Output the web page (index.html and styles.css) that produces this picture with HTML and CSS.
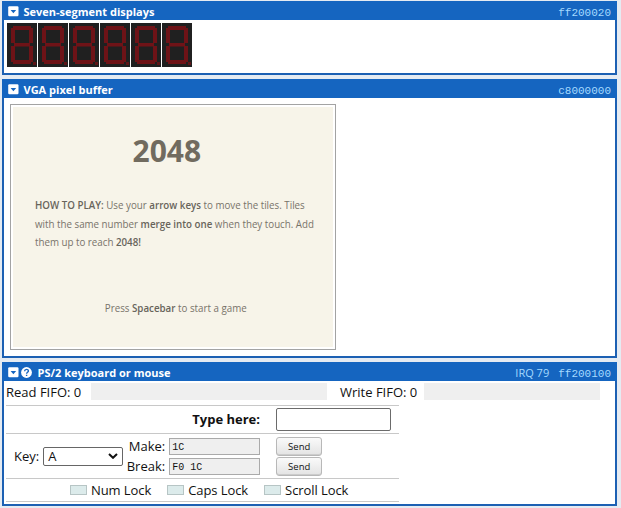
FILE: index.html
```html
<!DOCTYPE html>
<html lang="en">
<head>
<meta charset="utf-8">
<title>Devices</title>
<link rel="stylesheet" href="styles.css">
</head>
<body>
<svg width="0" height="0" class="defs">
  <symbol id="collapse" viewBox="0 0 11 11"><rect x=".2" y=".2" width="10.3" height="10" rx="1.2" fill="#fff"/><path d="M2.6 4h5.6L5.4 7.2z" fill="#1565c0"/></symbol>
  <symbol id="digit" viewBox="0 0 30 44">
    <rect width="30" height="44" fill="#202020"/>
    <g fill="#6e1317"><path d="M6 3h18v4H6zM7 20h16v3.5H7zM6 37h18v4H6zM4 5h4v15H4zM22 5h4v15h-4zM4 23h4v16H4zM22 23h4v16h-4z"/><path d="M26 39h3v3h-3z" opacity=".8"/></g>
  </symbol>
</svg>
<main>
  <section class="panel segments">
    <header><svg class="toggle"><use href="#collapse"/></svg><h2>Seven-segment displays</h2><code>ff200020</code></header>
    <div class="digits">
      <svg><use href="#digit"/></svg><svg><use href="#digit"/></svg><svg><use href="#digit"/></svg><svg><use href="#digit"/></svg><svg><use href="#digit"/></svg><svg><use href="#digit"/></svg>
    </div>
  </section>
  <section class="panel vga">
    <header><svg class="toggle"><use href="#collapse"/></svg><h2>VGA pixel buffer</h2><code>c8000000</code></header>
    <div class="screen">
      <h1>2048</h1>
      <p><b>HOW TO PLAY:</b> Use your <b>arrow keys</b> to move the tiles. Tiles<br>with the same number <b>merge into one</b> when they touch. Add<br>them up to reach <b>2048!</b></p>
      <p class="start">Press <b>Spacebar</b> to start a game</p>
    </div>
  </section>
  <section class="panel ps2">
    <header>
      <svg class="toggle"><use href="#collapse"/></svg>
      <svg class="help" viewBox="0 0 11 11"><circle cx="5.5" cy="5.5" r="5.4" fill="#fff"/><path d="M3.6 4.2C3.7 1.7 7.4 1.8 7.4 4c0 1.4-1.8 1.2-1.8 2.7M5.6 7.7v1.4" fill="none" stroke="#1565c0" stroke-width="1.4"/></svg>
      <h2>PS/2 keyboard or mouse</h2><span class="irq">IRQ 79</span><code>ff200100</code>
    </header>
    <div class="fifo"><span>Read FIFO: 0</span><i></i><span class="write">Write FIFO: 0</span><i></i></div>
    <div class="form">
      <div class="row typing"><label for="type">Type here:</label><input id="type" type="text"></div>
      <div class="row keys">
        <label for="key">Key:</label>
        <div class="select" id="key"><span>A</span><svg viewBox="0 0 10 6"><path d="M1 1l4 3.8L9 1" fill="none" stroke="#111" stroke-width="2"/></svg></div>
        <div class="codes"><span>Make:</span><output>1C</output><button>Send</button><span>Break:</span><output>F0 1C</output><button>Send</button></div>
      </div>
      <div class="row locks"><span>Num Lock</span><span>Caps Lock</span><span>Scroll Lock</span></div>
    </div>
  </section>
</main>
</body>
</html>
```
FILE: styles.css
```css
* { box-sizing: border-box; }
body { margin: 0; height: 508px; overflow: hidden; background: #e5ebf2; font: 13px/18px "Open Sans", sans-serif; color: #111; }
.defs { display: block; }
main { display: flex; flex-direction: column; gap: 4px; width: 615px; margin: 1px 0 0 2px; }
.panel { border: 2px solid #1c60b3; border-top: 0; background: #fff; }
.segments { height: 74px; }
.vga { height: 279px; }
.ps2 { height: 144px; }
header { display: flex; align-items: center; height: 19px; margin: 0 -2px; padding: 3px 6px 0 6px; background: #1565c0; color: #a5daff; }
h2 { margin: 0 auto 0 4.5px; font-size: 11px; line-height: 16px; font-weight: 700; color: #fff; white-space: nowrap; }
code { padding-top: 1px; font: 11px/16px "Liberation Mono", monospace; }
.toggle, .help { width: 11px; height: 11px; flex: none; }
.toggle { margin-bottom: 1px; }
.help { margin: 0 1px 1px 2px; }
.irq { margin-right: 9px; font-size: 11px; line-height: 16px; }
.digits { display: flex; gap: 1px; padding: 3px 0 0 3px; }
.digits svg { width: 30px; height: 44px; }
.screen { width: 326px; height: 246px; margin: 6px 0 0 6px; padding: 2px; border: 1px solid #a3a3a3; background: #f7f4e9; background-clip: content-box; color: #77736a; }
.screen h1, .screen p { margin: 0; white-space: nowrap; transform-origin: 0 0; }
.screen h1 { padding: 24px 0 0 119.5px; font-size: 30px; line-height: 40px; color: #716b5f; }
.screen p { padding: 25px 0 0 24.8px; font-size: 11px; line-height: 18.67px; transform: scaleX(.887); }
.screen b { font-weight: 600; color: #68645b; }
.screen .start { padding: 47px 0 0 103.5px; }
.fifo { display: grid; grid-template-columns: 85px 236px 97px 176px; height: 21px; padding: 2px 0 0 2px; }
.fifo i { height: 17px; background: #efefef; }
.write { padding-left: 13px; }
.form { width: 393px; margin: 3px 0 0 2px; border-top: 1px solid #c8c8c8; }
.row { border-bottom: 1px solid #c8c8c8; }
.typing { display: grid; grid-template-columns: 254px 115px; column-gap: 16px; align-items: center; height: 28px; font-weight: 700; text-align: right; }
.typing label { padding-bottom: 1px; }
.typing input { width: 115px; height: 23px; border: 1px solid #6b6b6b; border-radius: 2px; }
.keys { display: flex; align-items: center; height: 45px; padding-left: 8px; }
.select { display: flex; align-items: center; justify-content: space-between; width: 80px; height: 19px; margin: 0 2px 0 4px; padding: 0 4px; border: 1px solid #666; border-radius: 2px; }
.select svg { width: 10px; height: 6px; }
.codes { display: grid; grid-template-columns: 40px 91px 46px; grid-template-rows: 19px 19px; row-gap: 1px; align-items: center; }
.codes span { text-align: right; }
.codes output { height: 17px; margin-left: 4px; width: 91px; padding: 1px 0 0 2px; border: 1px solid #aaa; background: #efefef; font: 10px/15px "Liberation Mono", monospace; }
.codes button { width: 46px; height: 19px; margin: 0 0 0 20px; padding: 0; border: 1px solid #b8b8b8; border-radius: 3px; background: linear-gradient(#fafafa, #e3e3e3); box-shadow: inset 0 -1px #ccc; font: 9.5px/18px "Open Sans", sans-serif; color: #111; }
.locks { display: flex; gap: 16px; height: 23px; align-items: center; padding: 0 0 0 64px; }
.locks span { display: flex; align-items: center; gap: 4px; white-space: nowrap; letter-spacing: -.08px; }
.locks span::before { content: ""; width: 15px; height: 8px; border: 1px solid #b7c5c5; background: #dcebeb; }
```
